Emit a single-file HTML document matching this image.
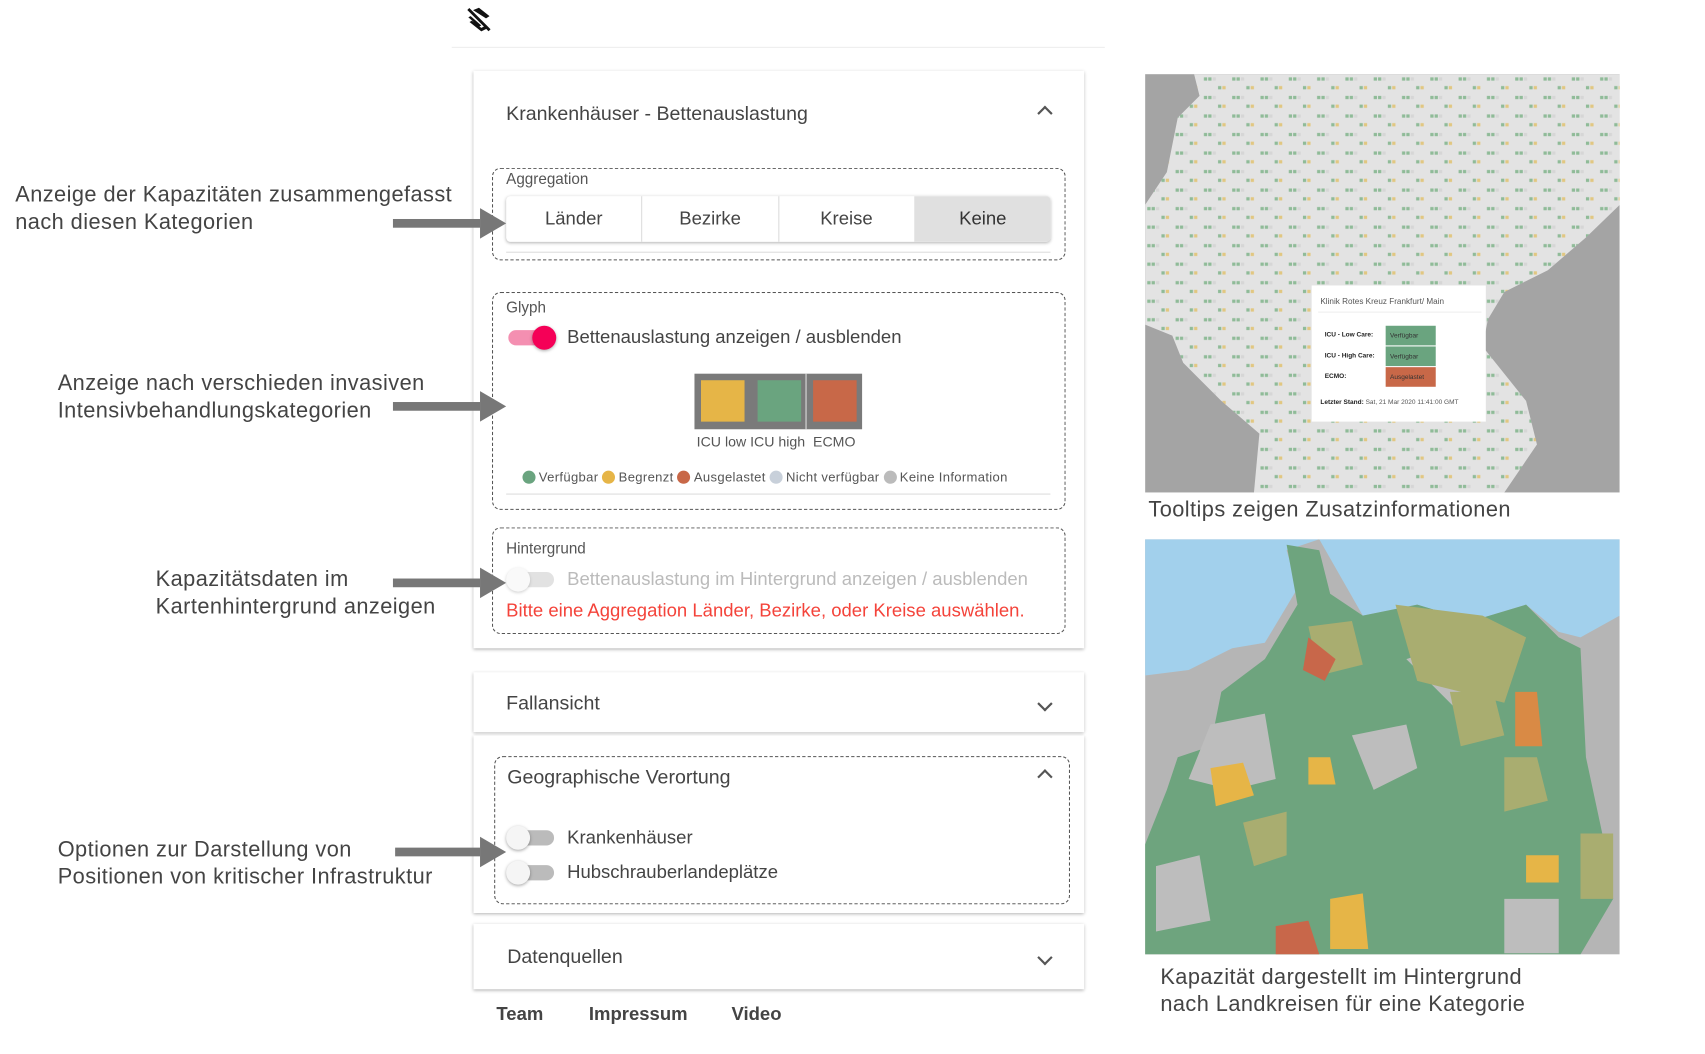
<!DOCTYPE html>
<html><head><meta charset="utf-8"><style>
*{margin:0;padding:0;box-sizing:border-box}
html,body{width:1705px;height:1054px;overflow:hidden;background:#fff}
#w{position:absolute;left:0;top:0;width:1560px;height:964px;transform:scale(1.0885,1.0895);transform-origin:0 0;font-family:"Liberation Sans",sans-serif;color:#444}
.a{position:absolute}
.ann{position:absolute;font-family:"Liberation Sans Narrow","Liberation Sans",sans-serif;font-size:20px;line-height:25px;color:#444;letter-spacing:.4px}
.arrow{position:absolute;height:8px;background:#777;z-index:5}
.arrow:after{content:"";position:absolute;right:-24px;top:-10px;border-left:24px solid #777;border-top:14px solid transparent;border-bottom:14px solid transparent}
.card{position:absolute;left:435px;width:561px;background:#fff;box-shadow:0 1px 3px rgba(0,0,0,.3)}
.dash{position:absolute;border:1.5px dashed #555;border-radius:8px}
.lbl{position:absolute;font-size:14px;color:#555}
.tg{position:absolute;width:46px;height:20px}
.tg .t{position:absolute;left:2px;top:3px;width:42px;height:14px;border-radius:7px;background:#bbb}
.tg .k{position:absolute;top:-1px;width:22px;height:22px;border-radius:50%;background:#f5f5f5;box-shadow:0 1px 3px rgba(0,0,0,.35)}
.chev{position:absolute;width:10px;height:10px;border-right:2px solid #555;border-bottom:2px solid #555}
.t17{position:absolute;font-size:17px;color:#444}
.leg{display:inline-block;width:12px;height:12px;border-radius:50%;vertical-align:-2px;margin-right:3px}
</style></head><body><div id="w">

<svg class="a" style="left:426px;top:5px" width="28" height="26" viewBox="0 0 24 24"><path d="M3 3l18 18" stroke="#111" stroke-width="2.4"/><path d="M7 4l5-2 9 7-3 2zM3 10l2-1 9 8-2 1zM4 14l2-1 8 6 4-2 2 2-6 3z" fill="#111"/></svg>
<div class="a" style="left:415px;top:43px;width:600px;height:1px;background:#eee"></div>

<div class="ann" style="left:14px;top:167px">Anzeige der Kapazitäten zusammengefasst<br>nach diesen Kategorien</div>
<div class="ann" style="left:53px;top:340px">Anzeige nach verschieden invasiven<br>Intensivbehandlungskategorien</div>
<div class="ann" style="left:143px;top:520px">Kapazitätsdaten im<br>Kartenhintergrund anzeigen</div>
<div class="ann" style="left:53px;top:768px">Optionen zur Darstellung von<br>Positionen von kritischer Infrastruktur</div>

<div class="card" style="top:65px;height:530px"></div>
<div class="a" style="left:465px;top:94px;font-size:18px;color:#444">Krankenhäuser - Bettenauslastung</div>
<div class="chev" style="left:955px;top:99px;transform:rotate(-135deg)"></div>

<div class="dash" style="left:452px;top:154px;width:527px;height:85px"></div>
<div class="lbl" style="left:465px;top:156px">Aggregation</div>
<div class="a" style="left:465px;top:180px;width:500px;height:42px;border-radius:4px;box-shadow:0 1px 3px rgba(0,0,0,.3);display:flex;font-size:17px;color:#444;overflow:hidden">
<div style="flex:1;text-align:center;line-height:42px;border-right:1px solid #ddd">Länder</div>
<div style="flex:1;text-align:center;line-height:42px;border-right:1px solid #ddd">Bezirke</div>
<div style="flex:1;text-align:center;line-height:42px;border-right:1px solid #ddd">Kreise</div>
<div style="flex:1;text-align:center;line-height:42px;background:#e0e0e0;color:#333">Keine</div></div>
<div class="a" style="left:465px;top:231px;width:500px;height:1px;background:#ddd"></div>

<div class="dash" style="left:452px;top:268px;width:527px;height:200px"></div>
<div class="lbl" style="left:465px;top:274px">Glyph</div>
<div class="tg" style="left:465px;top:300px"><div class="t" style="background:#f48fb1"></div><div class="k" style="left:24px;background:#f50057"></div></div>
<div class="t17" style="left:521px;top:300px">Bettenauslastung anzeigen / ausblenden</div>
<div class="a" style="left:638px;top:343px;width:154px;height:51px;background:#7a7a7a"></div>
<div class="a" style="left:740px;top:343px;width:1px;height:51px;background:#ddd"></div>
<div class="a" style="left:644px;top:349px;width:40px;height:38px;background:#e6b547"></div>
<div class="a" style="left:696px;top:349px;width:40px;height:38px;background:#6aa47f"></div>
<div class="a" style="left:747px;top:349px;width:40px;height:38px;background:#c86848"></div>
<div class="a" style="left:640px;top:398px;font-size:13px;color:#555">ICU low ICU high &nbsp;ECMO</div>
<div class="a" style="left:480px;top:431px;font-size:12px;color:#555;white-space:nowrap;letter-spacing:.3px"><span class="leg" style="background:#6aa47f"></span>Verfügbar <span class="leg" style="background:#e6b547"></span>Begrenzt <span class="leg" style="background:#c86848"></span>Ausgelastet <span class="leg" style="background:#c8d0da"></span>Nicht verfügbar <span class="leg" style="background:#bbb"></span>Keine Information</div>
<div class="a" style="left:465px;top:453px;width:500px;height:1px;background:#ddd"></div>

<div class="dash" style="left:452px;top:484px;width:527px;height:98px"></div>
<div class="lbl" style="left:465px;top:495px">Hintergrund</div>
<div class="tg" style="left:465px;top:522px;opacity:.55"><div class="t" style="background:#ccc"></div><div class="k" style="left:0"></div></div>
<div class="t17" style="left:521px;top:522px;color:#bbb">Bettenauslastung im Hintergrund anzeigen / ausblenden</div>
<div class="t17" style="left:465px;top:551px;color:#f4433a">Bitte eine Aggregation Länder, Bezirke, oder Kreise auswählen.</div>

<div class="card" style="top:617px;height:55px"></div>
<div class="a" style="left:465px;top:635px;font-size:18px">Fallansicht</div>
<div class="chev" style="left:955px;top:641px;transform:rotate(45deg)"></div>

<div class="card" style="top:675px;height:163px"></div>
<div class="dash" style="left:454px;top:694px;width:529px;height:136px"></div>
<div class="a" style="left:466px;top:703px;font-size:18px">Geographische Verortung</div>
<div class="chev" style="left:955px;top:708px;transform:rotate(-135deg)"></div>
<div class="tg" style="left:465px;top:759px"><div class="t"></div><div class="k" style="left:0"></div></div>
<div class="t17" style="left:521px;top:759px">Krankenhäuser</div>
<div class="tg" style="left:465px;top:791px"><div class="t"></div><div class="k" style="left:0"></div></div>
<div class="t17" style="left:521px;top:791px">Hubschrauberlandeplätze</div>

<div class="card" style="top:848px;height:60px"></div>
<div class="a" style="left:466px;top:868px;font-size:18px">Datenquellen</div>
<div class="chev" style="left:955px;top:874px;transform:rotate(45deg)"></div>

<div class="arrow" style="left:361px;top:201px;width:80px"></div>
<div class="arrow" style="left:361px;top:369px;width:80px"></div>
<div class="arrow" style="left:361px;top:531px;width:80px"></div>
<div class="arrow" style="left:363px;top:778px;width:78px"></div>

<div class="a" style="left:456px;top:921px;font-size:17px;font-weight:bold;color:#444">Team</div>
<div class="a" style="left:541px;top:921px;font-size:17px;font-weight:bold;color:#444">Impressum</div>
<div class="a" style="left:672px;top:921px;font-size:17px;font-weight:bold;color:#444">Video</div>

<svg class="a" style="left:1052px;top:68px" width="436" height="384" viewBox="0 0 436 384">
<defs><pattern id="dots" width="26" height="17" patternUnits="userSpaceOnUse"><rect x="2" y="3" width="3" height="3" fill="#4a9a5a"/><rect x="6" y="3" width="3" height="3" fill="#4a9a5a"/><rect x="10" y="3" width="3" height="3" fill="#ccc"/><rect x="15" y="11" width="3" height="3" fill="#4a9a5a"/><rect x="19" y="11" width="3" height="3" fill="#e0b030"/></pattern></defs>
<rect width="436" height="384" fill="#a4a4a4"/>
<path d="M45 0H436V120L405 150 370 180 330 200 315 225 310 250 350 300 360 340 330 384H100L105 330 70 300 35 265 25 240 0 230 0 120 20 90 30 40 50 20z" fill="#e3e3e3"/>
<path d="M45 0H436V120L405 150 370 180 330 200 315 225 310 250 350 300 360 340 330 384H100L105 330 70 300 35 265 25 240 0 230 0 120 20 90 30 40 50 20z" fill="url(#dots)" opacity=".55"/>
<rect x="153" y="194" width="160" height="125" fill="#fff"/>
<text x="161" y="211" font-size="7.5" fill="#555" font-family="Liberation Sans">Klinik Rotes Kreuz Frankfurt/ Main</text>
<rect x="159" y="218" width="150" height="1" fill="#eee"/>
<text x="165" y="241" font-size="6" font-weight="bold" fill="#222" font-family="Liberation Sans">ICU - Low Care:</text>
<text x="165" y="260" font-size="6" font-weight="bold" fill="#222" font-family="Liberation Sans">ICU - High Care:</text>
<text x="165" y="279" font-size="6" font-weight="bold" fill="#222" font-family="Liberation Sans">ECMO:</text>
<rect x="221" y="231" width="46" height="18" fill="#6aa47f"/><rect x="221" y="250" width="46" height="18" fill="#6aa47f"/><rect x="221" y="269" width="46" height="18" fill="#c86848"/>
<text x="225" y="242" font-size="6" fill="#333" font-family="Liberation Sans">Verfügbar</text>
<text x="225" y="261" font-size="6" fill="#333" font-family="Liberation Sans">Verfügbar</text>
<text x="225" y="280" font-size="6" fill="#333" font-family="Liberation Sans">Ausgelastet</text>
<text x="161" y="303" font-size="6" fill="#555" font-family="Liberation Sans"><tspan font-weight="bold" fill="#222">Letzter Stand:</tspan> Sat, 21 Mar 2020 11:41:00 GMT</text>
</svg>
<div class="ann" style="left:1055px;top:456px">Tooltips zeigen Zusatzinformationen</div>

<svg class="a" style="left:1052px;top:495px" width="436" height="381" viewBox="0 0 436 381">
<rect width="436" height="381" fill="#b5b5b5"/>
<path d="M0 0H436V70L400 90 380 85 350 60 300 75 250 60 200 70 160 0 130 10 140 45 110 95 80 100 40 120 0 125z" fill="#a2d0ec"/>
<path d="M130 5L160 10 170 50 200 70 250 60 300 75 350 60 380 90 400 100 405 200 420 270 430 330 400 381H0V280 L20 230 30 200 60 190 70 140 110 110 140 60z" fill="#6ea47e"/>
<path d="M60 170L110 160 120 220 80 230 40 220z M190 180l50 -10 10 40 -40 20z M240 110l60-20 30 40-40 30z M330 330h50v50h-50z M10 300l40-10 10 60-50 10z" fill="#bdbdbd"/>
<path d="M150 80l40-5 10 40-40 10z M230 60l80 10 40 20-20 60-80-20z M280 140l40 0 10 40-40 10z M90 260l40-10 0 40-30 10z M400 270l30 0 0 60-30 0z M330 200l30 0 10 40-40 10z" fill="#a9ad70"/>
<path d="M150 90l25 20-10 20-20-10z" fill="#c8674a"/>
<path d="M340 140l20 0 5 50-25 0z" fill="#d98a45"/>
<path d="M60 210l30 -5 10 30-35 10z M150 200l20 0 5 25-25 0z M350 290l30 0 0 25-30 0z M170 330l30 -5 5 51-35 0z" fill="#e6b547"/>
<path d="M120 355l30-5 10 31h-40z" fill="#c8674a"/>
</svg>
<div class="ann" style="left:1066px;top:885px">Kapazität dargestellt im Hintergrund<br>nach Landkreisen für eine Kategorie</div>

</div></body></html>
